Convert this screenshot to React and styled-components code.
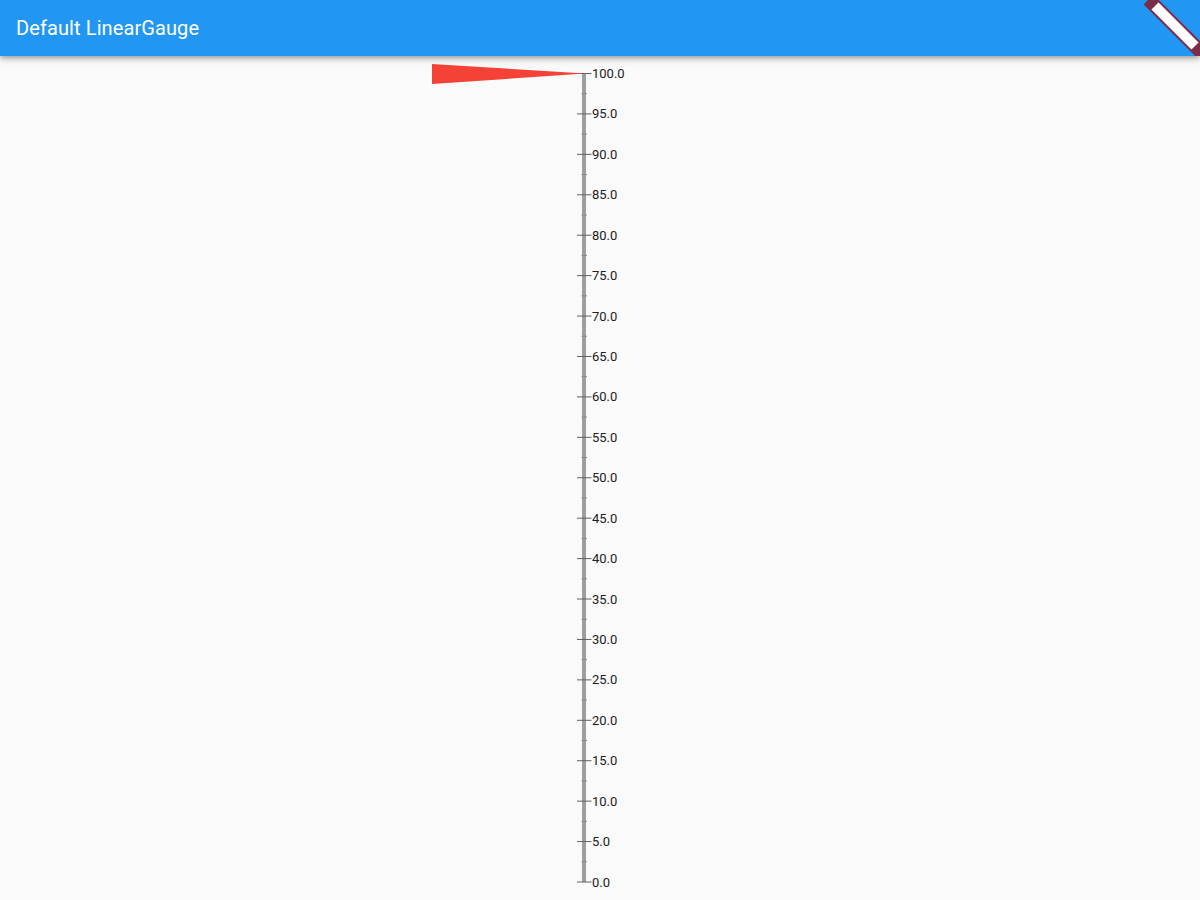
import React from "react";
import styled, { createGlobalStyle } from "styled-components";

const GlobalStyle = createGlobalStyle`
  html, body {
    margin: 0;
    padding: 0;
    background: #fafafa;
    font-family: Roboto, "Liberation Sans", sans-serif;
  }
`;

const Page = styled.div`
  position: relative;
  width: 1200px;
  height: 900px;
  overflow: hidden;
  background: #fafafa;
  display: flex;
  flex-direction: column;
`;

const AppBar = styled.header`
  position: relative;
  z-index: 2;
  height: 56px;
  flex: none;
  display: flex;
  align-items: center;
  padding: 0 16px;
  background: #2196f3;
  box-shadow: 0 2px 4px -1px rgba(0, 0, 0, 0.2), 0 4px 5px 0 rgba(0, 0, 0, 0.14),
    0 1px 10px 0 rgba(0, 0, 0, 0.12);
`;

const Title = styled.h1`
  margin: 0;
  font-family: Roboto, "Liberation Sans", sans-serif;
  font-size: 20px;
  font-weight: 400;
  color: #ffffff;
  letter-spacing: 0.1px;
`;

const Body = styled.main`
  flex: 1;
  display: flex;
  justify-content: center;
`;

const GaugeSvg = styled.svg`
  display: block;
  width: 360px;
  height: 844px;
`;

const Label = styled.text`
  font-family: Roboto, "Liberation Sans", sans-serif;
  font-size: 13px;
  fill: #212121;
`;

// debug ribbon in the corner, drawn over the app bar
const Banner = styled.svg`
  position: absolute;
  top: 0;
  right: 0;
  z-index: 5;
  width: 60px;
  height: 56px;
`;

const TOP = 17.5;
const STEP = 8.085;
const BAR_X = 162;
const yOf = (v) => TOP + (100 - v) * STEP;

function LinearGauge({ value }) {
  const majors = [];
  for (let v = 100; v >= 0; v -= 5) majors.push(v);
  const minors = majors.slice(0, -1).map((v) => v - 2.5);
  const py = yOf(value);

  return (
    <GaugeSvg viewBox="0 0 360 844">
      <rect x={BAR_X} y={yOf(100)} width="4" height={yOf(0) - yOf(100)} fill="#9e9e9e" />
      {minors.map((v) => (
        <line
          key={v}
          x1={BAR_X - 0.5}
          x2={BAR_X + 5}
          y1={yOf(v)}
          y2={yOf(v)}
          stroke="#8a8a8a"
          strokeWidth="1"
        />
      ))}
      {majors.map((v) => (
        <g key={v}>
          <line
            x1={BAR_X - 5}
            x2={BAR_X + 9.5}
            y1={yOf(v)}
            y2={yOf(v)}
            stroke="#616161"
            strokeWidth="1"
          />
          <Label x={BAR_X + 10} y={yOf(v)} dominantBaseline="central">
            {v.toFixed(1)}
          </Label>
        </g>
      ))}
      <polygon points={`12,${py - 9.5} 12,${py + 10.5} 165,${py}`} fill="#f44336" />
    </GaugeSvg>
  );
}

export default function App() {
  return (
    <Page>
      <GlobalStyle />
      <AppBar>
        <Title>Default LinearGauge</Title>
      </AppBar>
      <Body>
        <LinearGauge value={100} />
      </Body>
      <Banner viewBox="0 0 60 56">
        <line x1="8.5" y1="-0.5" x2="70" y2="61" stroke="#7b2c48" strokeWidth="14" />
        <line x1="15" y1="6" x2="55" y2="46" stroke="#ffffff" strokeWidth="10" />
      </Banner>
    </Page>
  );
}
